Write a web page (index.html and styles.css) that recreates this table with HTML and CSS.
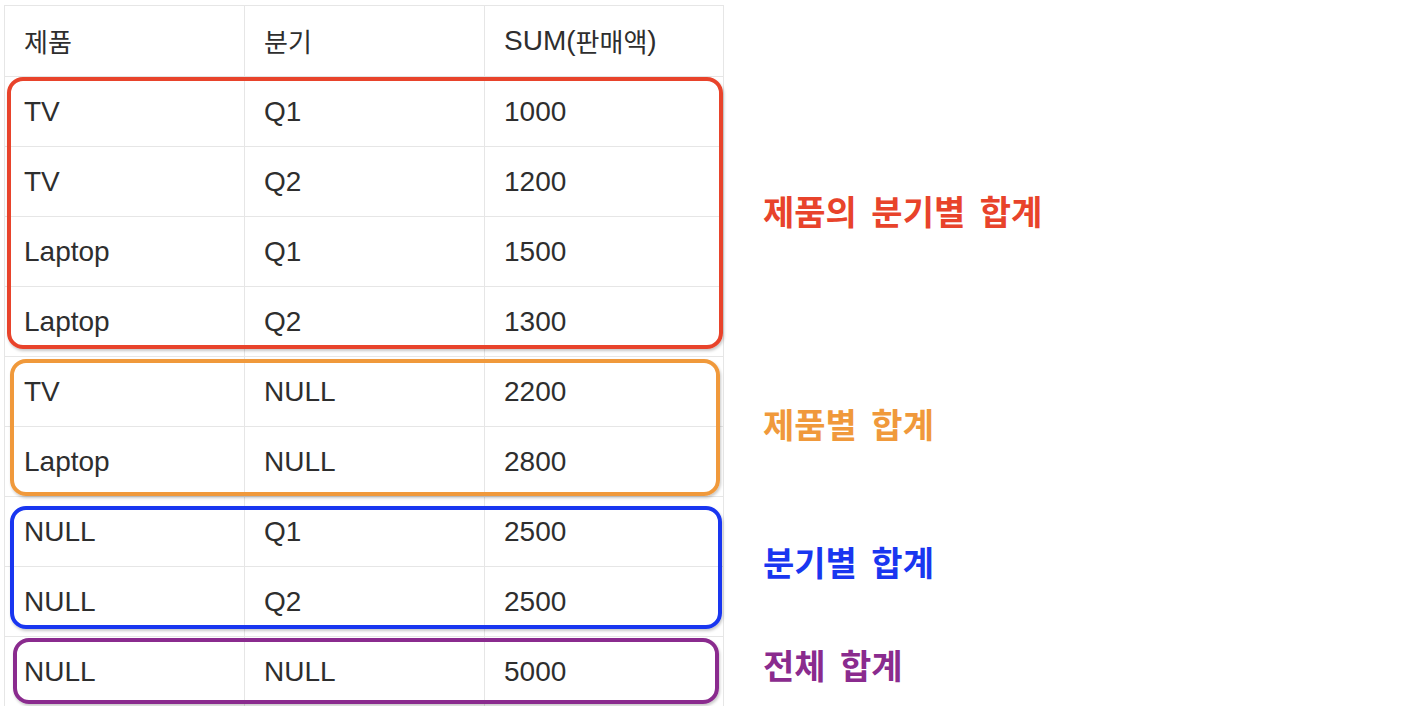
FILE: index.html
```html
<!DOCTYPE html>
<html lang="ko">
<head>
<meta charset="utf-8">
<title>ROLLUP / CUBE 결과</title>
<link rel="stylesheet" href="styles.css">
</head>
<body>
<div class="board">
  <div class="table-wrap">
    <div class="table">
      <div class="cell head"><span class="ko">제품</span></div>
      <div class="cell head"><span class="ko">분기</span></div>
      <div class="cell head last">SUM(<span class="ko">판매액</span>)</div>

      <div class="cell">TV</div><div class="cell">Q1</div><div class="cell last">1000</div>
      <div class="cell">TV</div><div class="cell">Q2</div><div class="cell last">1200</div>
      <div class="cell">Laptop</div><div class="cell">Q1</div><div class="cell last">1500</div>
      <div class="cell">Laptop</div><div class="cell">Q2</div><div class="cell last">1300</div>
      <div class="cell">TV</div><div class="cell">NULL</div><div class="cell last">2200</div>
      <div class="cell">Laptop</div><div class="cell">NULL</div><div class="cell last">2800</div>
      <div class="cell">NULL</div><div class="cell">Q1</div><div class="cell last">2500</div>
      <div class="cell">NULL</div><div class="cell">Q2</div><div class="cell last">2500</div>
      <div class="cell bottom">NULL</div><div class="cell bottom">NULL</div><div class="cell bottom last">5000</div>
    </div>
    <div class="marks">
      <div class="mark mark-red"></div>
      <div class="mark mark-orange"></div>
      <div class="mark mark-blue"></div>
      <div class="mark mark-purple"></div>
    </div>
  </div>
  <div class="labels">
    <div class="label-spacer"></div>
    <div class="label label-red"><span>제품의 분기별 합계</span></div>
    <div class="label label-orange"><span>제품별 합계</span></div>
    <div class="label label-blue"><span>분기별 합계</span></div>
    <div class="label label-purple"><span>전체 합계</span></div>
  </div>
</div>
</body>
</html>
```

FILE: styles.css
```css
html, body {
  margin: 0;
  padding: 0;
  background: #ffffff;
}

body {
  font-family: "Liberation Sans", "Noto Sans CJK KR", sans-serif;
  color: #2e2e2e;
}

.board {
  display: flex;
  align-items: flex-start;
  padding: 5px 0 0 4px;
}

.table-wrap {
  position: relative;
  width: 720px;
}

.table {
  display: grid;
  grid-template-columns: 240px 240px 240px;
  grid-template-rows: 71px repeat(9, 70px);
}

.cell {
  box-sizing: border-box;
  border-top: 1px solid #e6e6e6;
  border-left: 1px solid #e6e6e6;
  padding-left: 19px;
  display: flex;
  align-items: center;
  font-size: 28px;
  line-height: 1;
  white-space: nowrap;
}

.cell.last {
  border-right: 1px solid #e6e6e6;
}

.cell.bottom {
  height: 71px;
  border-bottom: 1px solid #e6e6e6;
}

.ko {
  font-family: "Noto Sans CJK KR", sans-serif;
  font-size: 26px;
}

.marks {
  position: absolute;
  inset: 0;
  display: grid;
  grid-template-columns: 1fr;
  grid-template-rows: 71px 280px 140px 140px 70px;
  pointer-events: none;
}

.mark {
  box-sizing: border-box;
  border: 4px solid;
  border-radius: 16px;
  box-shadow: 1px 2px 3px rgba(0, 0, 0, 0.22);
}

.mark-red {
  grid-row: 2;
  border-color: #e8432b;
  margin: 1px 1px 7px 3px;
}

.mark-orange {
  grid-row: 3;
  border-color: #f0993b;
  margin: 3px 4px 0 6px;
}

.mark-blue {
  grid-row: 4;
  border-color: #1936f0;
  margin: 10px 2px 7px 6px;
}

.mark-purple {
  grid-row: 5;
  border-color: #8a2b8e;
  margin: 2px 5px 2px 9px;
}

.labels {
  display: flex;
  flex-direction: column;
  margin-left: 39px;
}

.label-spacer {
  height: 71px;
}

.label {
  box-sizing: border-box;
  display: flex;
  align-items: center;
  font-family: "Noto Sans CJK KR", sans-serif;
  font-weight: 700;
  font-size: 34px;
  line-height: 1;
  word-spacing: 5px;
  white-space: nowrap;
}

.label-red {
  height: 280px;
  color: #e8432b;
  padding-bottom: 10px;
}

.label-orange {
  height: 140px;
  color: #f0993b;
  padding-bottom: 4px;
}

.label-blue {
  height: 140px;
  color: #1936f0;
  padding-bottom: 8px;
}

.label-purple {
  height: 70px;
  color: #8a2b8e;
  padding-bottom: 12px;
}
```
